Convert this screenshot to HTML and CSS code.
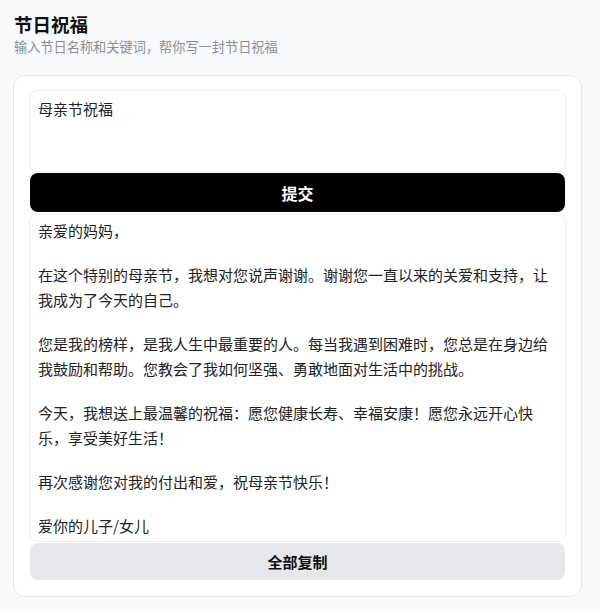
FILE: index.html
```html
<!DOCTYPE html>
<html lang="zh-CN">
<head>
<meta charset="utf-8">
<title>节日祝福</title>
<link rel="stylesheet" href="styles.css">
</head>
<body>
<div class="page">
  <header class="header">
    <h1 class="title">节日祝福</h1>
    <p class="subtitle">输入节日名称和关键词，帮你写一封节日祝福</p>
  </header>
  <main class="card">
    <div class="input">母亲节祝福</div>
    <button class="btn-submit">提交</button>
    <div class="output">
      <p>亲爱的妈妈，</p>
      <p>在这个特别的母亲节，我想对您说声谢谢。谢谢您一直以来的关爱和支持，让<br>我成为了今天的自己。</p>
      <p>您是我的榜样，是我人生中最重要的人。每当我遇到困难时，您总是在身边给<br>我鼓励和帮助。您教会了我如何坚强、勇敢地面对生活中的挑战。</p>
      <p>今天，我想送上最温馨的祝福：愿您健康长寿、幸福安康！愿您永远开心快<br>乐，享受美好生活！</p>
      <p>再次感谢您对我的付出和爱，祝母亲节快乐！</p>
      <p>爱你的儿子/女儿</p>
    </div>
    <button class="btn-copy">全部复制</button>
  </main>
</div>
</body>
</html>
```

FILE: styles.css
```css
* { box-sizing: border-box; }
html, body {
  margin: 0;
  background: #f8f9fb;
  font-family: "Noto Sans CJK SC", "Noto Sans", sans-serif;
  color: #222;
}
.page {
  padding: 12px 18px 0 13px;
}
.header {
  padding-left: 1px;
}
.title {
  margin: 0;
  font-size: 18.5px;
  line-height: 24px;
  font-weight: 700;
  color: #111;
}
.subtitle {
  margin: 1px 0 0;
  font-size: 13.2px;
  line-height: 20px;
  color: #8a8f98;
}
.card {
  margin-top: 18px;
  background: #fff;
  border: 1px solid #e6e8ec;
  border-radius: 12px;
  padding: 14px 15px 16px;
  display: flex;
  flex-direction: column;
}
.input {
  height: 82px;
  border: 1px solid #eceef1;
  border-radius: 8px;
  padding: 6px 8px;
  font-size: 15px;
  line-height: 24px;
  color: #222;
}
.btn-submit {
  margin: 1px 1px 0;
  height: 39px;
  border: none;
  border-radius: 8px;
  background: #000;
  color: #fff;
  font-family: inherit;
  font-size: 16px;
  font-weight: 700;
}
.output {
  margin-top: 2px;
  height: 328px;
  border: 1px solid #eceef1;
  border-radius: 8px;
  padding: 3px 8px;
  font-size: 15px;
  line-height: 25px;
  color: #222;
}
.output p {
  margin: 0 0 19px;
}
.output p:last-child {
  margin-bottom: 0;
}
.btn-copy {
  margin: 1px 1px 0;
  height: 37px;
  border: none;
  border-radius: 8px;
  background: #e5e7eb;
  color: #111;
  font-family: inherit;
  font-size: 15px;
  font-weight: 700;
}
```
